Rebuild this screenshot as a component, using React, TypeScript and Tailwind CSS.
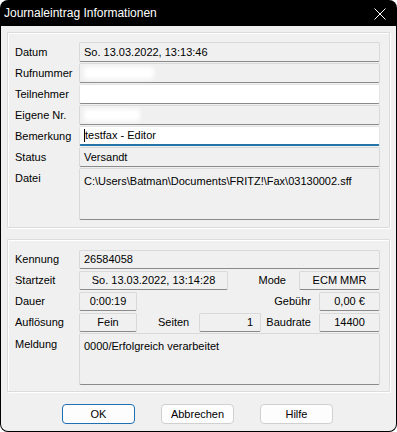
import React from "react";

const font = { fontFamily: '"Liberation Sans", Arial, sans-serif' };

function Field({
  children,
  className = "",
  white = false,
  focus = false,
}: {
  children?: React.ReactNode;
  className?: string;
  white?: boolean;
  focus?: boolean;
}) {
  return (
    <div
      className={
        "flex items-center rounded-[2px] border text-[11px] text-black " +
        (white ? "bg-white border-[#e3e3e3] " : "bg-[#f0f0f0] border-[#d9d9d9] ") +
        (focus ? "border-b-2 border-b-[#2474a8] " : "border-b-[#8a8a8a] ") +
        className
      }
    >
      {children}
    </div>
  );
}

function Label({ children, className = "" }: { children: React.ReactNode; className?: string }) {
  return <div className={"text-[11px] text-black leading-none " + className}>{children}</div>;
}

function Group({ children, className = "" }: { children: React.ReactNode; className?: string }) {
  return (
    <div
      className={
        "mx-[6px] border border-[#dcdcdc] rounded-[1px] shadow-[inset_1px_1px_0_#ffffff,1px_1px_0_#ffffff] pl-[7px] pr-[9px] " +
        className
      }
    >
      {children}
    </div>
  );
}

function Button({ children, primary = false }: { children: React.ReactNode; primary?: boolean }) {
  return (
    <div
      className={
        "w-[73px] h-[20px] flex items-center justify-center rounded-[4px] bg-[#fdfdfd] text-[11px] text-black " +
        (primary ? "border border-[#1f6fb3]" : "border border-[#d0d0d0]")
      }
    >
      {children}
    </div>
  );
}

export default function App() {
  return (
    <div className="w-[397px] h-[432px] bg-white" style={font}>
      <div className="w-[397px] h-[432px] bg-black rounded-[8px] flex flex-col px-[1px] pb-[1px]">
        {/* Title bar */}
        <div className="h-[26px] flex items-center justify-between pl-[3px] pr-[10px]">
          <span className="text-white text-[12px] leading-none">Journaleintrag Informationen</span>
          <svg width="12" height="12" viewBox="0 0 12 12" className="mt-[1px]">
            <path d="M0.5 0.5 L11.5 11.5 M11.5 0.5 L0.5 11.5" stroke="#ffffff" strokeWidth="1" />
          </svg>
        </div>
        {/* Body */}
        <div className="flex-1 bg-[#f0f0f0] rounded-b-[7px] flex flex-col pt-[6px]">
          <Group className="pt-[9px] pb-[7px]">
            <div className="flex flex-col gap-[1px]">
              <div className="flex items-center h-[20px]">
                <Label className="w-[64px]">Datum</Label>
                <Field className="flex-1 h-[20px] pl-[4px]">So. 13.03.2022, 13:13:46</Field>
              </div>
              <div className="flex items-center h-[20px]">
                <Label className="w-[64px]">Rufnummer</Label>
                <Field className="flex-1 h-[20px] pl-[4px]">
                  <div className="w-[70px] h-[12px] bg-white rounded-[3px] blur-[2px]" />
                </Field>
              </div>
              <div className="flex items-center h-[20px]">
                <Label className="w-[64px]">Teilnehmer</Label>
                <Field white className="flex-1 h-[20px] pl-[4px]" />
              </div>
              <div className="flex items-center h-[20px]">
                <Label className="w-[64px]">Eigene Nr.</Label>
                <Field className="flex-1 h-[20px] pl-[4px]">
                  <div className="w-[56px] h-[12px] bg-white rounded-[3px] blur-[2px]" />
                </Field>
              </div>
              <div className="flex items-center h-[20px]">
                <Label className="w-[64px]">Bemerkung</Label>
                <Field white focus className="flex-1 h-[20px] pl-[4px]">
                  <span className="w-[1px] h-[13px] bg-black" />
                  <span>testfax - Editor</span>
                </Field>
              </div>
              <div className="flex items-center h-[20px]">
                <Label className="w-[64px]">Status</Label>
                <Field className="flex-1 h-[20px] pl-[4px]">Versandt</Field>
              </div>
              <div className="flex items-start h-[52px]">
                <Label className="w-[64px] pt-[5px]">Datei</Label>
                <Field className="flex-1 h-[52px] pl-[4px] !items-start pt-[4px]">
                  C:\Users\Batman\Documents\FRITZ!\Fax\03130002.sff
                </Field>
              </div>
            </div>
          </Group>

          <Group className="mt-[11px] pt-[9px] pb-[6px]">
            <div className="flex flex-col gap-[1px]">
              <div className="flex items-center h-[20px]">
                <Label className="w-[64px]">Kennung</Label>
                <Field className="flex-1 h-[19px] pl-[4px]">26584058</Field>
              </div>
              <div className="flex items-center h-[20px]">
                <Label className="w-[64px]">Startzeit</Label>
                <Field className="w-[149px] h-[19px] justify-center">So. 13.03.2022, 13:14:28</Field>
                <div className="flex-1" />
                <Label className="mr-[13px]">Mode</Label>
                <Field className="w-[81px] h-[19px] justify-center">ECM MMR</Field>
              </div>
              <div className="flex items-center h-[20px]">
                <Label className="w-[64px]">Dauer</Label>
                <Field className="w-[58px] h-[19px] justify-center">0:00:19</Field>
                <div className="flex-1" />
                <Label className="mr-[8px]">Gebühr</Label>
                <Field className="w-[61px] h-[19px] justify-center">0,00 €</Field>
              </div>
              <div className="flex items-center h-[20px]">
                <Label className="w-[64px]">Auflösung</Label>
                <Field className="w-[58px] h-[19px] justify-center">Fein</Field>
                <Label className="ml-[21px] w-[41px]">Seiten</Label>
                <Field className="w-[62px] h-[19px] justify-end pr-[7px]">1</Field>
                <div className="flex-1" />
                <Label className="mr-[8px]">Baudrate</Label>
                <Field className="w-[61px] h-[19px] justify-center">14400</Field>
              </div>
              <div className="flex items-start h-[52px]">
                <Label className="w-[64px] pt-[6px]">Meldung</Label>
                <Field className="flex-1 h-[52px] pl-[4px] !items-start pt-[4px]">
                  0000/Erfolgreich verarbeitet
                </Field>
              </div>
            </div>
          </Group>

          <div className="flex pl-[61px] gap-[26px] mt-[12px]">
            <Button primary>OK</Button>
            <Button>Abbrechen</Button>
            <Button>Hilfe</Button>
          </div>
        </div>
      </div>
    </div>
  );
}
